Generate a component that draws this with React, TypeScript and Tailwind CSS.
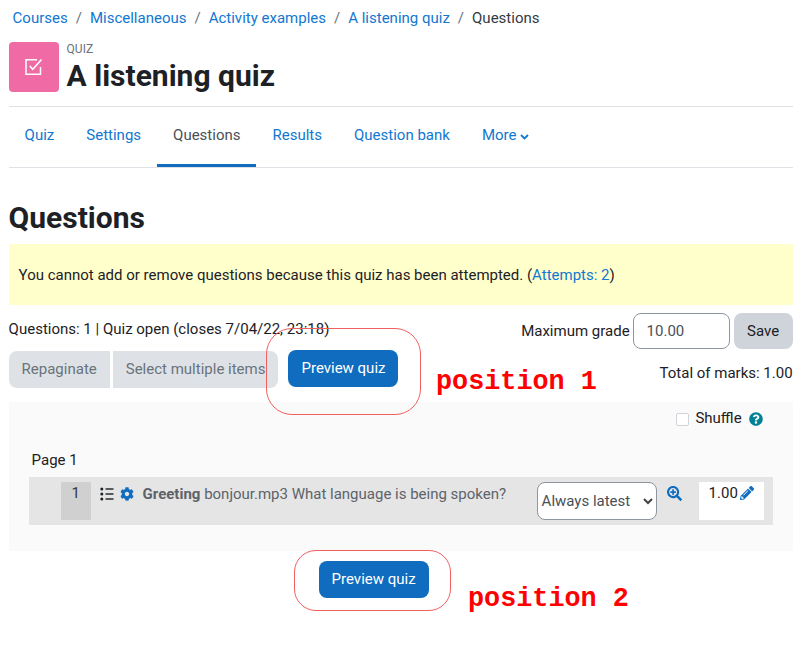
import { FaCog, FaSearchPlus, FaPencilAlt, FaQuestionCircle } from "react-icons/fa";

function Crumb({ children }: { children: React.ReactNode }) {
  return <a className="text-[#1177d1]">{children}</a>;
}
function Sep() {
  return <span className="px-[8px] text-[#6a737b]">/</span>;
}
function Tab({ children, active }: { children: React.ReactNode; active?: boolean }) {
  return (
    <a className={`flex h-[60px] items-center border-b-[3px] px-4 ${active ? "border-[#0f6cbf] text-[#495057]" : "border-transparent text-[#1177d1]"}`}>
      {children}
    </a>
  );
}

export default function App() {
  return (
    <div className="relative h-[653px] w-[802px] overflow-hidden bg-white pl-[8.6px] pr-[9px] text-[15px] leading-[22.5px] text-[#1d2125] [font-family:Roboto,sans-serif]">
      <nav className="flex h-[42px] items-start pl-1 pt-[7px]">
        <Crumb>Courses</Crumb><Sep /><Crumb>Miscellaneous</Crumb><Sep /><Crumb>Activity examples</Crumb><Sep /><Crumb>A listening quiz</Crumb><Sep /><span className="text-[#343a40]">Questions</span>
      </nav>

      <header className="box-content flex h-[64px] items-start border-b border-[#dee2e6]">
        <div className="flex h-[50px] w-[50px] items-center justify-center rounded bg-[#f06ba6]">
          <svg width="20" height="20" viewBox="0 0 20 20" fill="none" stroke="#fff" strokeWidth="1.5">
            <path d="M16.5 10v7.2H2V2.8h11" />
            <path d="M5.8 9l3 3.4L17.5 2.5" strokeWidth="1.6" />
          </svg>
        </div>
        <div className="ml-2">
          <div className="h-[15px] text-[12px] leading-[15px] text-[#6a737b]">QUIZ</div>
          <h1 className="mt-[1px] text-[30px] font-bold leading-[36px]">A listening quiz</h1>
        </div>
      </header>

      <div className="flex h-[61px] border-b border-[#dee2e6]">
        <Tab>Quiz</Tab>
        <Tab>Settings</Tab>
        <Tab active>Questions</Tab>
        <Tab>Results</Tab>
        <Tab>Question bank</Tab>
        <Tab>
          More
          <svg width="9" height="6" viewBox="0 0 9 6" fill="none" className="ml-[4px] mt-[3px]"><path d="M1 1l3.5 3.5L8 1" stroke="#1177d1" strokeWidth="1.8" /></svg>
        </Tab>
      </div>

      <h2 className="mt-[32px] h-[44px] text-[30px] font-bold leading-[36px]">Questions</h2>

      <div className="flex h-[61px] w-[784px] items-center bg-[#ffffcc] pl-[10px] pt-px">
        <p>You cannot add or remove questions because this quiz has been attempted. (<a className="text-[#1177d1]">Attempts: 2</a>)</p>
      </div>

      <div className="mt-[8px] flex w-[784px] items-start justify-between">
        <div>
          <div className="mt-[5px] h-[28px]">Questions: 1 | Quiz open (closes 7/04/22, 23:18)</div>
          <div className="mt-[5px] flex items-start">
            <span className="flex h-[37px] items-center rounded-l-lg bg-[#dee2e6] px-[13px] text-[#6a737b]">Repaginate</span>
            <span className="ml-[3px] flex h-[37px] items-center rounded-r-lg bg-[#dee2e6] px-[13px] text-[#6a737b]">Select multiple items</span>
            <button className="-mt-px ml-[10px] h-[37px] rounded-lg bg-[#0f6cbf] px-[13px] text-white">Preview quiz</button>
          </div>
        </div>
        <div className="flex flex-col items-end">
          <div className="flex items-center">
            <span className="mr-[3px]">Maximum grade</span>
            <span className="flex h-[36px] w-[97px] items-center rounded-lg border border-[#8f959e] pl-[13px] text-[#495057]">10.00</span>
            <button className="ml-1 h-[36px] w-[59px] rounded-lg bg-[#ced4da]">Save</button>
          </div>
          <div className="mt-[13px]">Total of marks: 1.00</div>
        </div>
      </div>

      <section className="mt-[14px] h-[149px] w-[784px] bg-[#fafafa] pt-[5px]">
        <div className="flex h-[22px] items-center justify-end pr-[30px]">
          <span className="mr-[6px] mt-[2px] h-[13px] w-[13px] rounded-[2px] border border-[#ced4da] bg-white" />
          <span>Shuffle</span>
          <FaQuestionCircle className="ml-[7px] mt-px h-[14px] w-[14px] text-[#008196]" />
        </div>
        <div className="mt-[20px] h-[28px] pl-[23px]">Page 1</div>
        <div className="ml-[20px] flex h-[48px] w-[744px] items-start bg-[#e5e5e5] pt-[5px]">
          <div className="ml-[32px] h-[38px] w-[30px] bg-[#d0d0d0] text-center text-[#343a40]">1</div>
          <svg width="14" height="14" viewBox="0 0 14 14" className="ml-[9px] mt-[5px]">
            <g fill="#1d2125"><circle cx="1.8" cy="2" r="1.5" /><circle cx="1.8" cy="7" r="1.5" /><circle cx="1.8" cy="12" r="1.5" /><rect x="5.5" y="1.3" width="8" height="1.4" /><rect x="5.5" y="6.3" width="8" height="1.4" /><rect x="5.5" y="11.3" width="8" height="1.4" /></g>
          </svg>
          <FaCog className="ml-[6px] mt-[5px] h-[14px] w-[14px] text-[#0f6cbf]" />
          <div className="ml-[9px] w-[394px] pt-px text-[#5d6369]">
            <b className="font-bold">Greeting</b> bonjour.mp3 What language is being spoken?
          </div>
          <div className="flex h-[38px] w-[120px] items-center justify-between rounded-lg border border-[#8f959e] bg-white pl-1 pr-[3px] pt-px text-[#495057]">
            <span>Always latest</span>
            <svg width="10" height="7" viewBox="0 0 10 7" fill="none"><path d="M1 1l4 4 4-4" stroke="#444" strokeWidth="2" /></svg>
          </div>
          <FaSearchPlus className="ml-[10px] mt-[4px] h-[15px] w-[15px] text-[#0f6cbf]" />
          <div className="ml-[17px] flex h-[38px] w-[65px] items-start bg-white pl-[10px] text-[#1d2125]">
            1.00<FaPencilAlt className="ml-[2px] mt-[4px] h-[14px] w-[14px] text-[#0f6cbf]" />
          </div>
        </div>
      </section>

      <div className="pl-[310px] pt-[10px]">
        <button className="h-[37px] rounded-lg bg-[#0f6cbf] px-[13px] text-white">Preview quiz</button>
      </div>

      <div className="absolute left-[266px] top-[328px] h-[87px] w-[155px] rounded-[26px] border border-[#f25f5f]" />
      <div className="absolute left-[294px] top-[550px] h-[61px] w-[157px] rounded-[22px] border border-[#f25f5f]" />
      <div className="absolute left-[436px] top-[367px] text-[26.8px] font-bold leading-[30px] text-[#ff0000] [font-family:'Liberation_Mono',monospace]">position 1</div>
      <div className="absolute left-[468px] top-[584px] text-[26.8px] font-bold leading-[30px] text-[#ff0000] [font-family:'Liberation_Mono',monospace]">position 2</div>
    </div>
  );
}
